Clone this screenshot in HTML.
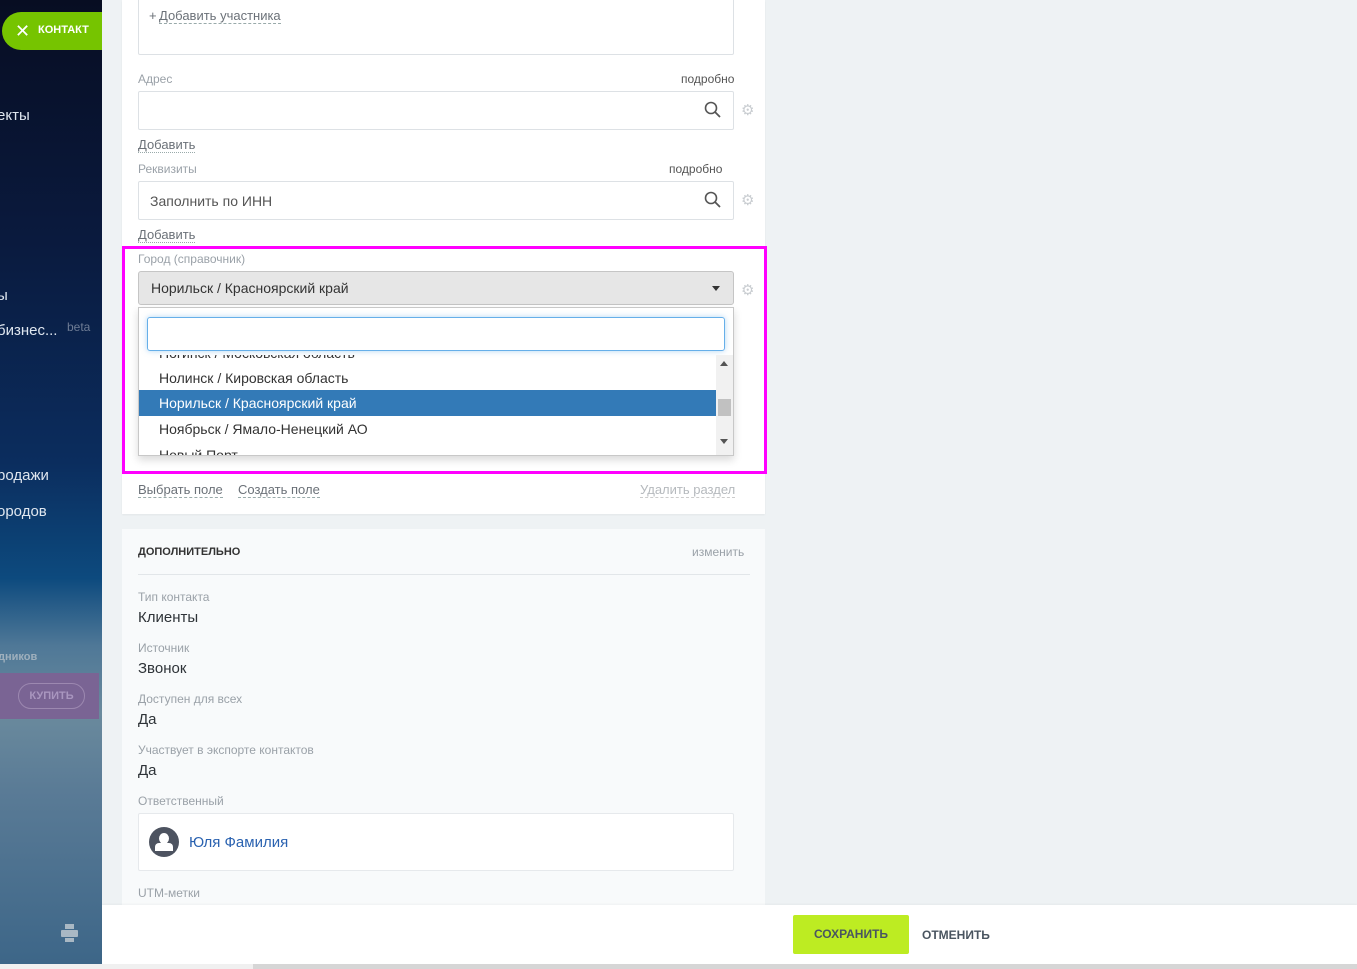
<!DOCTYPE html>
<html><head><meta charset="utf-8"><style>
*{box-sizing:border-box;margin:0;padding:0}
body{width:1357px;height:969px;overflow:hidden;background:#eef2f4;font-family:"Liberation Sans",sans-serif;position:relative}
.abs{position:absolute}
.side{left:0;top:0;width:102px;height:964px;background:linear-gradient(180deg,#070d22 0%,#0a1a3e 25%,#0b2d5e 48%,#0d4a7e 60%,#4f7897 67%,#6a8a9d 74%,#5a7b96 82%,#3d6688 100%)}
.st{color:#dfe6ef;font-size:15px;position:absolute;white-space:nowrap}
.card{left:122px;top:0;width:643px;height:514px;background:#fff;box-shadow:0 1px 2px rgba(0,0,0,.05)}
.card2{left:122px;top:529px;width:643px;height:380px;background:#f8fafb}
.lbl{font-size:12px;color:#9aa1a8;position:absolute}
.inp{position:absolute;border:1px solid #dde1e5;background:#fff;border-radius:2px}
.lnk{position:absolute;font-size:13px;color:#6b7178;border-bottom:1px dashed #9aa;line-height:14px}
.gear{position:absolute;font-family:"DejaVu Sans",sans-serif;font-size:15px;color:#c9cdd1;line-height:15px}
.val{position:absolute;font-size:15px;color:#2e3338}
.it{position:absolute;left:20px;font-size:14px;color:#333;white-space:nowrap}
</style></head><body>
<div class="abs side"></div>
<div class="abs" style="left:2px;top:12px;width:100px;height:38px;background:#76c400;border-radius:19px 0 0 19px"></div>
<div class="abs" style="left:15px;top:22px;color:#fff;font-size:18px;line-height:18px">✕</div>
<div class="abs" style="left:38px;top:24px;color:#fff;font-size:11px;font-weight:bold">КОНТАКТ</div>
<div class="st" style="left:-3px;top:107px">екты</div>
<div class="st" style="left:-3px;top:287px">ы</div>
<div class="st" style="left:-3px;top:322px">бизнес...</div>
<div class="abs" style="left:67px;top:320px;color:#6e7c95;font-size:12px">beta</div>
<div class="st" style="left:-3px;top:467px">родажи</div>
<div class="st" style="left:-3px;top:503px">ородов</div>
<div class="abs" style="left:-2px;top:651px;color:#9fb0bd;font-size:11px;font-weight:bold">дников</div>
<div class="abs" style="left:0;top:673px;width:99px;height:46px;background:#7a6494"></div>
<div class="abs" style="left:18px;top:683px;width:67px;height:26px;border:1px solid #9c88b0;border-radius:13px;color:#a996bf;font-size:11px;font-weight:bold;text-align:center;line-height:24px">КУПИТЬ</div>
<svg class="abs" style="left:61px;top:924px" width="17" height="18"><rect x="4" y="0" width="9" height="5" fill="#a9b8c4"/><rect x="0" y="6" width="17" height="7" rx="1" fill="#a9b8c4"/><rect x="4" y="14" width="9" height="4" fill="#a9b8c4"/></svg>

<div class="abs card"></div>
<div class="inp" style="left:138px;top:-2px;width:596px;height:57px"></div>
<div class="abs" style="left:149px;top:8px;font-size:13px;color:#6b7178">+</div>
<div class="lnk" style="left:159px;top:9px">Добавить участника</div>

<div class="lbl" style="left:138px;top:72px">Адрес</div>
<div class="lbl" style="left:681px;top:72px;color:#555">подробно</div>
<div class="inp" style="left:138px;top:91px;width:596px;height:39px"></div>
<svg class="abs" style="left:704px;top:101px" width="18" height="18"><circle cx="7" cy="7" r="5.5" fill="none" stroke="#555" stroke-width="1.6"/><line x1="11" y1="11" x2="16" y2="16" stroke="#555" stroke-width="1.8"/></svg>
<div class="gear" style="left:741px;top:103px">⚙</div>
<div class="lnk" style="left:138px;top:138px;border-bottom-style:dotted">Добавить</div>

<div class="lbl" style="left:138px;top:162px">Реквизиты</div>
<div class="lbl" style="left:669px;top:162px;color:#555">подробно</div>
<div class="inp" style="left:138px;top:181px;width:596px;height:39px"></div>
<div class="abs" style="left:150px;top:193px;font-size:14px;color:#555">Заполнить по ИНН</div>
<svg class="abs" style="left:704px;top:191px" width="18" height="18"><circle cx="7" cy="7" r="5.5" fill="none" stroke="#555" stroke-width="1.6"/><line x1="11" y1="11" x2="16" y2="16" stroke="#555" stroke-width="1.8"/></svg>
<div class="gear" style="left:741px;top:193px">⚙</div>
<div class="lnk" style="left:138px;top:228px;border-bottom-style:dotted">Добавить</div>

<div class="abs" style="left:122px;top:246px;width:645px;height:228px;border:3px solid #ff00ff"></div>
<div class="lbl" style="left:138px;top:252px">Город (справочник)</div>
<div class="abs" style="left:138px;top:271px;width:596px;height:34px;background:#e6e6e6;border:1px solid #c5c5c5;border-radius:3px"></div>
<div class="abs" style="left:151px;top:280px;font-size:14px;color:#333">Норильск / Красноярский край</div>
<div class="abs" style="left:712px;top:286px;width:0;height:0;border-left:4px solid transparent;border-right:4px solid transparent;border-top:5px solid #333"></div>
<div class="gear" style="left:741px;top:283px">⚙</div>
<div class="abs" style="left:138px;top:307px;width:596px;height:149px;background:#fff;border:1px solid #c8c8c8;box-shadow:0 4px 8px rgba(0,0,0,.15);overflow:hidden">
  <div class="abs" style="left:8px;top:9px;width:578px;height:34px;border:1px solid #66afe9;border-radius:3px;box-shadow:0 0 6px rgba(102,175,233,.5)"></div>
  <div class="abs" style="left:0;top:47px;width:594px;height:100px;overflow:hidden">
    <div class="it" style="top:-10px">Ногинск / Московская область</div>
    <div class="it" style="top:15px">Нолинск / Кировская область</div>
    <div class="abs" style="left:0;top:35px;width:577px;height:26px;background:#337ab7"></div>
    <div class="it" style="top:40px;color:#fff">Норильск / Красноярский край</div>
    <div class="it" style="top:66px">Ноябрьск / Ямало-Ненецкий АО</div>
    <div class="it" style="top:92px">Новый Порт</div>
    <div class="abs" style="left:577px;top:0;width:17px;height:100px;background:#f1f1f1"></div>
    <div class="abs" style="left:579px;top:44px;width:13px;height:17px;background:#c1c1c1"></div>
    <div class="abs" style="left:581px;top:6px;border-left:4px solid transparent;border-right:4px solid transparent;border-bottom:5px solid #555"></div>
    <div class="abs" style="left:581px;top:84px;border-left:4px solid transparent;border-right:4px solid transparent;border-top:5px solid #555"></div>
  </div>
</div>

<div class="lnk" style="left:138px;top:483px">Выбрать поле</div>
<div class="lnk" style="left:238px;top:483px">Создать поле</div>
<div class="lnk" style="left:640px;top:483px;color:#b5b9bd;border-bottom-color:#ccc">Удалить раздел</div>

<div class="abs card2"></div>
<div class="abs" style="left:138px;top:546px;font-size:11px;font-weight:bold;color:#333">ДОПОЛНИТЕЛЬНО</div>
<div class="abs" style="left:692px;top:545px;font-size:12px;color:#9aa1a8">изменить</div>
<div class="abs" style="left:138px;top:574px;width:612px;height:1px;background:#e2e6e9"></div>
<div class="lbl" style="left:138px;top:590px">Тип контакта</div>
<div class="val" style="left:138px;top:609px">Клиенты</div>
<div class="lbl" style="left:138px;top:641px">Источник</div>
<div class="val" style="left:138px;top:660px">Звонок</div>
<div class="lbl" style="left:138px;top:692px">Доступен для всех</div>
<div class="val" style="left:138px;top:711px">Да</div>
<div class="lbl" style="left:138px;top:743px">Участвует в экспорте контактов</div>
<div class="val" style="left:138px;top:762px">Да</div>
<div class="lbl" style="left:138px;top:794px">Ответственный</div>
<div class="inp" style="left:138px;top:813px;width:596px;height:58px;border-color:#e6e9ec"></div>
<div class="abs" style="left:149px;top:827px;width:30px;height:30px;border-radius:50%;background:#4d5360;overflow:hidden">
  <div class="abs" style="left:10px;top:6px;width:10px;height:11px;border-radius:50%;background:#fff"></div>
  <div class="abs" style="left:6px;top:16px;width:18px;height:8px;border-radius:4px 4px 0 0;background:#fff"></div>
</div>
<div class="abs" style="left:189px;top:834px;font-size:15px;color:#2a62b0">Юля Фамилия</div>
<div class="lbl" style="left:138px;top:886px">UTM-метки</div>

<div class="abs" style="left:102px;top:905px;width:1255px;height:59px;background:#fff;box-shadow:0 -1px 2px rgba(0,0,0,.04)"></div>
<div class="abs" style="left:793px;top:915px;width:116px;height:39px;background:#bdec22;border-radius:2px;font-size:12px;font-weight:bold;color:#4a5560;text-align:center;line-height:39px">СОХРАНИТЬ</div>
<div class="abs" style="left:922px;top:928px;font-size:12px;font-weight:bold;color:#4a5560">ОТМЕНИТЬ</div>
<div class="abs" style="left:0;top:964px;width:1357px;height:5px;background:#d6d6d6"></div>
<div class="abs" style="left:0;top:964px;width:253px;height:5px;background:#f0f0f0"></div>
</body></html>
